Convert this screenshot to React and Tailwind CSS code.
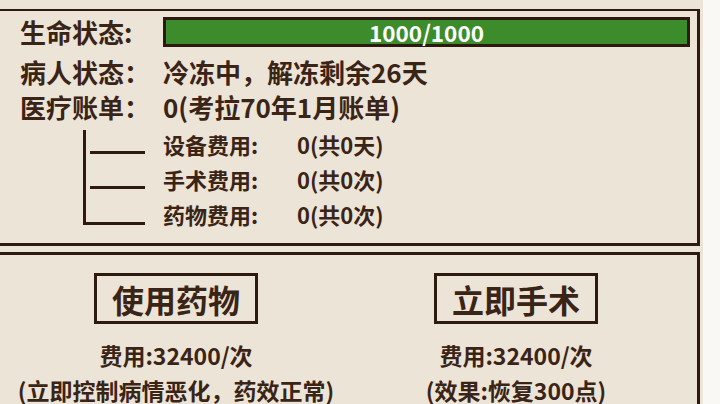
import React from "react";

const font = { fontFamily: '"Noto Sans CJK SC", "Noto Sans", sans-serif' };

const feeRows = [
    { label: "设备费用:", value: "0(共0天)" },
    { label: "手术费用:", value: "0(共0次)" },
    { label: "药物费用:", value: "0(共0次)" },
];

const actions = [
    { title: "使用药物", cost: "费用:32400/次", note: "(立即控制病情恶化，药效正常)", width: "w-[352px]" },
    { title: "立即手术", cost: "费用:32400/次", note: "(效果:恢复300点)", width: "w-[328px]" },
];

// connector lines for the bill breakdown
const TreeLines = () => (
    <svg width="145" height="105" className="shrink-0">
        <path d="M84.5 -3 V93.5 H145" stroke="#2d1b10" strokeWidth="3" fill="none" />
        <path d="M90 22.5 H145" stroke="#2d1b10" strokeWidth="3" />
        <path d="M90 57.5 H145" stroke="#2d1b10" strokeWidth="3" />
    </svg>
);

const App = () => {
    return (
        <div className="flex w-[720px] h-[404px] overflow-hidden bg-[#faf8f4] text-[#3a2416] font-bold" style={font}>
            <div className="w-[703px] shrink-0 bg-[#ece4d7]">

                <div className="w-[700px] mt-[9px] border-t-2 border-r-[3px] border-b-[3px] border-[#2d1b10]">
                    <div className="flex items-center mt-[6px] h-[30px]">
                        <span className="w-[163px] pl-[20px] text-[26px] leading-none">生命状态:</span>
                        <div className="w-[527px] h-[30px] border-[3px] border-[#2a1a10] bg-[#3c8c2c] flex items-center justify-center text-white text-[22.5px] leading-none">
                            1000/1000
                        </div>
                    </div>
                    <div className="flex mt-[7px] text-[26px] leading-[35px]">
                        <span className="w-[163px] pl-[20px]">病人状态：</span>
                        <span>冷冻中，解冻剩余26天</span>
                    </div>
                    <div className="flex text-[26px] leading-[35px]">
                        <span className="w-[163px] pl-[20px]">医疗账单：</span>
                        <span>0(考拉70年1月账单)</span>
                    </div>
                    <div className="flex mt-[6px] mb-[8px]">
                        <TreeLines />
                        <div className="flex flex-col -mt-[3px] pl-[18px] text-[22px] leading-[35px]">
                            {feeRows.map((row) => (
                                <div key={row.label} className="flex">
                                    <span className="w-[134px]">{row.label}</span>
                                    <span>{row.value}</span>
                                </div>
                            ))}
                        </div>
                    </div>
                </div>

                <div className="w-[700px] h-[160px] mt-[6px] border-t-[3px] border-r-[3px] border-[#2d1b10] flex pt-[18px]">
                    {actions.map((a) => (
                        <div key={a.title} className={`${a.width} flex flex-col items-center`}>
                            <div className="h-[51px] px-[15px] border-[3px] border-[#2d1b10] flex items-center text-[32px] leading-none">
                                {a.title}
                            </div>
                            <div className="mt-[13px] text-[23px] leading-[36px]">{a.cost}</div>
                            <div className="mt-[5px] text-[23px] leading-[24px] whitespace-nowrap">{a.note}</div>
                        </div>
                    ))}
                </div>

            </div>
        </div>
    );
};

export default App;
